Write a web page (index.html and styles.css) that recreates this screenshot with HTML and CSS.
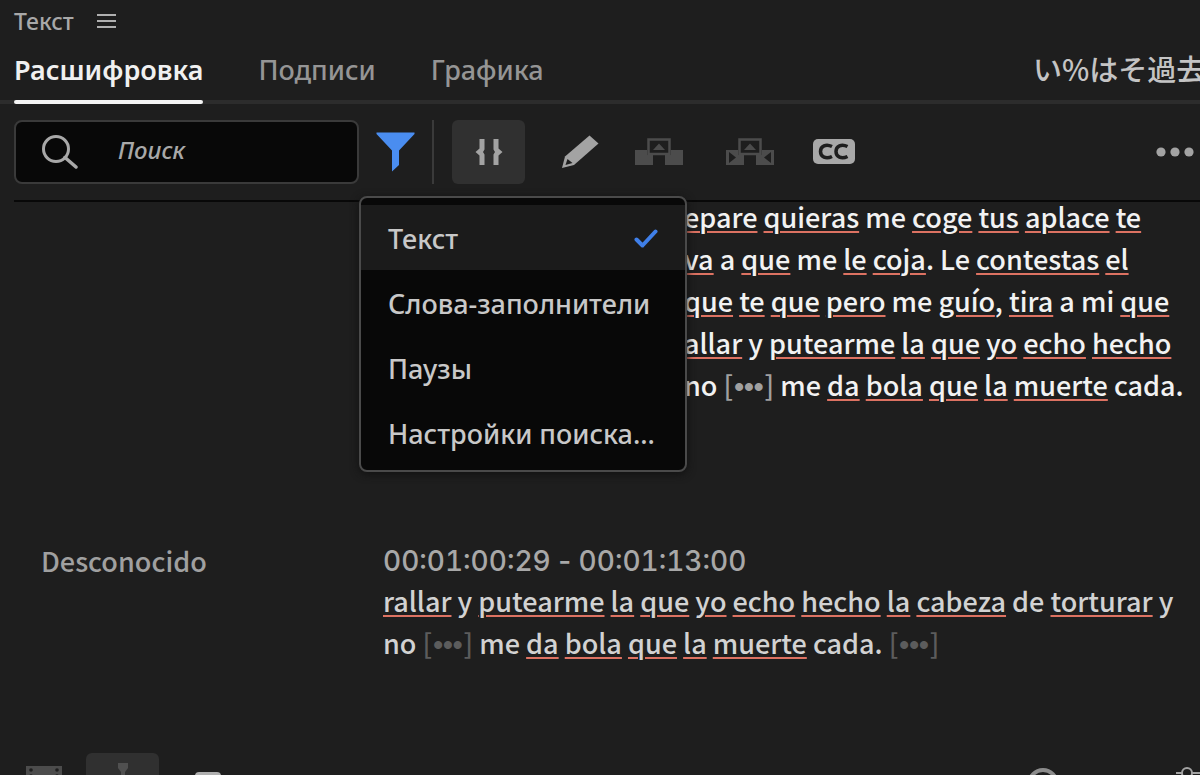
FILE: index.html
```
<!DOCTYPE html>
<html lang="ru">
<head>
<meta charset="utf-8">
<title>Текст</title>
<link rel="stylesheet" href="styles.css">
</head>
<body>
<div class="panel">
  <header class="panel-title">
    <h1>Текст</h1>
    <button class="plain" type="button" aria-label="Меню панели">
      <svg width="20" height="16" viewBox="0 0 20 16"><path d="M0 2H19M0 8H19M0 14H19" stroke="#b0b0b0" stroke-width="2"/></svg>
    </button>
  </header>

  <nav class="tabs">
    <a class="tab active" href="#transcript">Расшифровка</a>
    <a class="tab" href="#captions">Подписи</a>
    <a class="tab" href="#graphics">Графика</a>
    <span class="glyphs" lang="ja">い%はそ過去</span>
  </nav>

  <div class="toolbar">
    <label class="search">
      <svg width="36" height="34" viewBox="0 0 36 34"><circle cx="14" cy="14" r="12.500" fill="none" stroke="#a8a8a8" stroke-width="3"/><path d="M23 22.500L34 32" stroke="#a8a8a8" stroke-width="3.500" stroke-linecap="round"/></svg>
      <input type="text" placeholder="Поиск" aria-label="Поиск">
    </label>
    <div class="filter">
      <button class="plain" type="button" aria-label="Фильтр">
        <svg width="40" height="40" viewBox="0 0 40 40"><path d="M0.500 0.500H38.500V2L23 18.500V33L16 39.500V18.500L0.500 2Z" fill="#4a8df0"/></svg>
      </button>
      <div class="menu" role="menu">
        <button class="menu-item selected" role="menuitem" type="button">Текст
          <svg width="24" height="20" viewBox="0 0 24 20"><path d="M2.500 10.500L8.500 16.500L21.500 2.500" fill="none" stroke="#3f7fe8" stroke-width="4" stroke-linecap="round" stroke-linejoin="round"/></svg>
        </button>
        <button class="menu-item" role="menuitem" type="button">Слова-заполнители</button>
        <button class="menu-item" role="menuitem" type="button">Паузы</button>
        <button class="menu-item" role="menuitem" type="button">Настройки поиска...</button>
      </div>
    </div>
    <div class="tools">
      <button class="plain toggle" type="button" aria-label="Паузы">
        <svg width="28" height="28" viewBox="0 0 28 28"><path d="M4.500 1H9.500V11.500L8 14L9.500 16.500V27H4.500V17.500L0.500 14L4.500 10.500ZM18.500 1H23.500V10.500L27.500 14L23.500 17.500V27H18.500V16.500L20 14L18.500 11.500Z" fill="#a3a3a3"/></svg>
      </button>
      <button class="plain" type="button" aria-label="Правка">
        <svg width="38" height="34" viewBox="0 0 38 34"><path d="M28.500 0.500L37.500 8.500L13 30L1 33L4 21.500Z" fill="#a3a3a3"/><path d="M6.500 24L11.500 28L4.500 30Z" fill="#1e1e1e"/></svg>
      </button>
      <button class="plain" type="button" aria-label="Вставить">
        <svg width="48" height="28" viewBox="0 0 48 28"><path d="M0 12H12V17H18V27H0ZM48 12H36V17H30V27H48Z" fill="#4c4c4c"/><path d="M13.500 1.500H34.500V16H13.500Z" fill="#1e1e1e" stroke="#4c4c4c" stroke-width="2.500"/><path d="M18 12L24 5.500L30 12Z" fill="#4c4c4c"/></svg>
      </button>
      <button class="plain overwrite" type="button" aria-label="Перезаписать">
        <svg width="48" height="28" viewBox="0 0 48 28"><path d="M0 12H12V17H18V27H0ZM48 12H36V17H30V27H48Z" fill="#4c4c4c"/><path d="M13.500 1.500H34.500V16H13.500Z" fill="#1e1e1e" stroke="#4c4c4c" stroke-width="2.500"/><path d="M18 12L24 5.500L30 12Z" fill="#4c4c4c"/><path d="M3 14L10 19.500L3 25ZM45 14L38 19.500L45 25Z" fill="#1e1e1e"/></svg>
      </button>
      <button class="plain" type="button" aria-label="Создать подписи">
        <svg width="46" height="28" viewBox="0 0 46 28"><rect x="3" y="1" width="42" height="25" rx="5" fill="#a8a8a8"/><path d="M22 8.500C16 5.500 10.500 8 10.500 13.500S16 21.500 22 18.500M37.500 8.500C31.500 5.500 26 8 26 13.500S31.500 21.500 37.500 18.500" fill="none" stroke="#1e1e1e" stroke-width="3.500"/></svg>
      </button>
    </div>
    <button class="plain more" type="button" aria-label="Дополнительно">
      <svg width="38" height="10" viewBox="0 0 38 10"><g fill="#a3a3a3"><circle cx="5" cy="5" r="4.600"/><circle cx="19" cy="5" r="4.600"/><circle cx="33" cy="5" r="4.600"/></g></svg>
    </button>
  </div>

  <main class="transcript" id="transcript">
    <section class="entry current">
      <p class="speech" lang="es">
        <span class="line"><u>epare</u> <u>quieras</u> me <u>coge</u> <u>tus</u> <u>aplace</u> <u>te</u></span>
        <span class="line"><u>va</u> a <u>que</u> me <u>le</u> <u>coja</u>. Le <u>contestas</u> <u>el</u></span>
        <span class="line"><u>que</u> <u>te</u> <u>que</u> <u>pero</u> me <u>guío</u>, <u>tira</u> a mi <u>que</u></span>
        <span class="line"><u>allar</u> y <u>putearme</u> <u>la</u> <u>que</u> <u>yo</u> <u>echo</u> <u>hecho</u></span>
        <span class="line">no <span class="pause">[<b>•••</b>]</span> me <u>da</u> <u>bola</u> <u>que</u> <u>la</u> <u>muerte</u> cada.</span>
      </p>
    </section>
    <section class="entry">
      <h2 class="speaker" lang="es">Desconocido</h2>
      <div>
        <p class="time"><time>00:01:00:29</time> - <time>00:01:13:00</time></p>
        <p class="speech" lang="es">
          <span class="line"><u>rallar</u> y <u>putearme</u> <u>la</u> <u>que</u> <u>yo</u> <u>echo</u> <u>hecho</u> <u>la</u> <u>cabeza</u> de <u>torturar</u> y</span>
          <span class="line">no <span class="pause">[<b>•••</b>]</span> me <u>da</u> <u>bola</u> <u>que</u> <u>la</u> <u>muerte</u> cada. <span class="pause">[<b>•••</b>]</span></span>
        </p>
      </div>
    </section>
  </main>

  <footer class="bottom-bar">
    <svg class="film" width="36" height="28" viewBox="0 0 36 28"><rect width="36" height="28" fill="#4c4c4c"/><g fill="#1e1e1e"><circle cx="5" cy="4" r="1.800"/><circle cx="31" cy="4" r="1.800"/><circle cx="5" cy="10" r="1.800"/><circle cx="31" cy="10" r="1.800"/></g></svg>
    <button class="plain snap" type="button" aria-label="Ползунок">
      <svg width="12" height="24" viewBox="0 0 12 24"><path d="M1 0H11V5L8 9V24H4V9L1 5Z" fill="#505050"/></svg>
    </button>
    <svg class="card" width="28" height="20" viewBox="0 0 28 20"><rect x="1" y="1" width="26" height="20" rx="4" fill="#b0b0b0"/></svg>
    <svg class="lens" width="32" height="32" viewBox="0 0 32 32"><circle cx="16" cy="16" r="14" fill="none" stroke="#8c8c8c" stroke-width="4"/></svg>
    <svg class="share" width="28" height="24" viewBox="0 0 28 24"><circle cx="15" cy="6" r="5" fill="none" stroke="#a3a3a3" stroke-width="2"/><path d="M4 6H10M20 6H28" stroke="#a3a3a3" stroke-width="2"/></svg>
  </footer>
</div>
</body>
</html>
```

FILE: styles.css
```
* { box-sizing: border-box; }

body {
  margin: 0;
  background: #1e1e1e;
  color: #b8b8b8;
  font-family: "Noto Sans", sans-serif;
  font-size: 27px;
}

h1, h2, p { margin: 0; font-weight: 500; }

svg { display: block; flex: none; }

.plain {
  display: flex;
  align-items: center;
  justify-content: center;
  padding: 0;
  border: 0;
  background: none;
}

.panel {
  display: flex;
  flex-direction: column;
  height: 100vh;
  overflow: hidden;
}

.panel-title {
  display: flex;
  align-items: center;
  gap: 23px;
  height: 42px;
  padding: 0 14px;
}

.panel-title h1 {
  color: #a8a8a8;
  font-size: 23px;
  line-height: 42px;
}

.tabs {
  display: flex;
  gap: 55px;
  height: 62px;
  padding-left: 14px;
  background: linear-gradient(#2c2c2c, #2c2c2c) bottom / 100% 4px no-repeat;
}

.tab {
  position: relative;
  color: #959595;
  font-weight: 500;
  line-height: 56px;
  text-decoration: none;
}

.tab.active {
  color: #f0f0f0;
  font-weight: 600;
}

.tab.active::after {
  content: "";
  position: absolute;
  left: 0;
  right: 0;
  bottom: 0;
  height: 4px;
  border-radius: 2px;
  background: #f4f4f4;
}

.glyphs {
  width: 167px;
  margin-left: auto;
  overflow: hidden;
  color: #c4c4c4;
  font-family: "Noto Sans CJK JP", sans-serif;
  font-size: 29px;
  font-weight: 500;
  line-height: 52px;
  white-space: nowrap;
}

.toolbar {
  display: flex;
  align-items: center;
  height: 96px;
  padding: 0 6px 0 14px;
}

.search {
  display: flex;
  align-items: center;
  gap: 40px;
  width: 345px;
  height: 64px;
  padding-left: 26px;
  border: 2px solid #3a3a3a;
  border-radius: 8px;
  background: #080808;
}

.search input {
  width: 200px;
  padding: 0 0 6px;
  border: 0;
  outline: 0;
  background: none;
  color: #a8a8a8;
  font: italic 500 24px "Noto Sans", sans-serif;
}

.search input::placeholder { color: #a8a8a8; }

.filter {
  position: relative;
  display: flex;
  align-items: center;
  height: 64px;
  padding: 0 16px 0 17px;
  border-right: 2px solid #3a3a3a;
}

.menu {
  position: absolute;
  z-index: 2;
  top: 76px;
  left: 0;
  width: 328px;
  padding: 7px 0 5px;
  border: 2px solid #4a4a4a;
  border-radius: 8px;
  background: #080808;
  box-shadow: 0 2px 8px #111;
}

.menu-item {
  display: flex;
  align-items: center;
  justify-content: space-between;
  width: 100%;
  height: 65px;
  padding: 2px 27px 0;
  border: 0;
  background: none;
  color: #c8c8c8;
  font: 500 27px "Noto Sans", sans-serif;
  white-space: nowrap;
}

.menu-item.selected { background: #1b1b1b; }

.tools {
  display: flex;
  align-items: center;
  gap: 36px;
  margin-left: 18px;
}

.overwrite { margin-left: 7px; }

.toggle {
  width: 73px;
  height: 64px;
  border-radius: 6px;
  background: #303030;
}

.more { margin-left: auto; }

.transcript {
  flex: 1;
  min-height: 0;
  margin-left: 14px;
  border-top: 2px solid #080808;
}

.entry {
  display: grid;
  grid-template-columns: 342px 1fr;
  padding-left: 27px;
  line-height: 42px;
}

.entry.current {
  display: block;
  height: 344px;
  margin-top: -6px;
  padding-left: 670px;
}

.speaker {
  color: #a0a0a0;
  font-family: "Noto Sans CJK JP", sans-serif;
  font-size: 27px;
}

.time {
  color: #a8a8a8;
  font-family: Inter, sans-serif;
  font-size: 28px;
}

.time time { font-variant-numeric: tabular-nums; }

.speech {
  color: #d2d2d2;
  font-family: "Noto Sans CJK JP", sans-serif;
}

.time + .speech { margin-top: -2px; }

.current .speech { color: #f2f2f2; }

.line { display: block; white-space: nowrap; }

.line u {
  text-decoration: underline 2px #dd7262;
  text-underline-offset: 3px;
}

.pause { color: #5c5c5c; }

.current .pause { color: #a0a0a0; }

.pause b {
  padding: 0 1px;
  font: 700 28px "Liberation Sans", sans-serif;
}

.bottom-bar {
  display: flex;
  align-items: flex-start;
  height: 22px;
  padding: 0 0 0 26px;
  overflow: hidden;
}

.film { margin-top: 13px; }

.snap {
  align-items: flex-start;
  width: 73px;
  height: 64px;
  margin-left: 24px;
  padding-top: 10px;
  border-radius: 6px;
  background: #303030;
}

.card { margin: 18px 0 0 35px; }

.lens { margin: 15px 0 0 auto; }

.share { margin: 14px 0 0 113px; }
```
